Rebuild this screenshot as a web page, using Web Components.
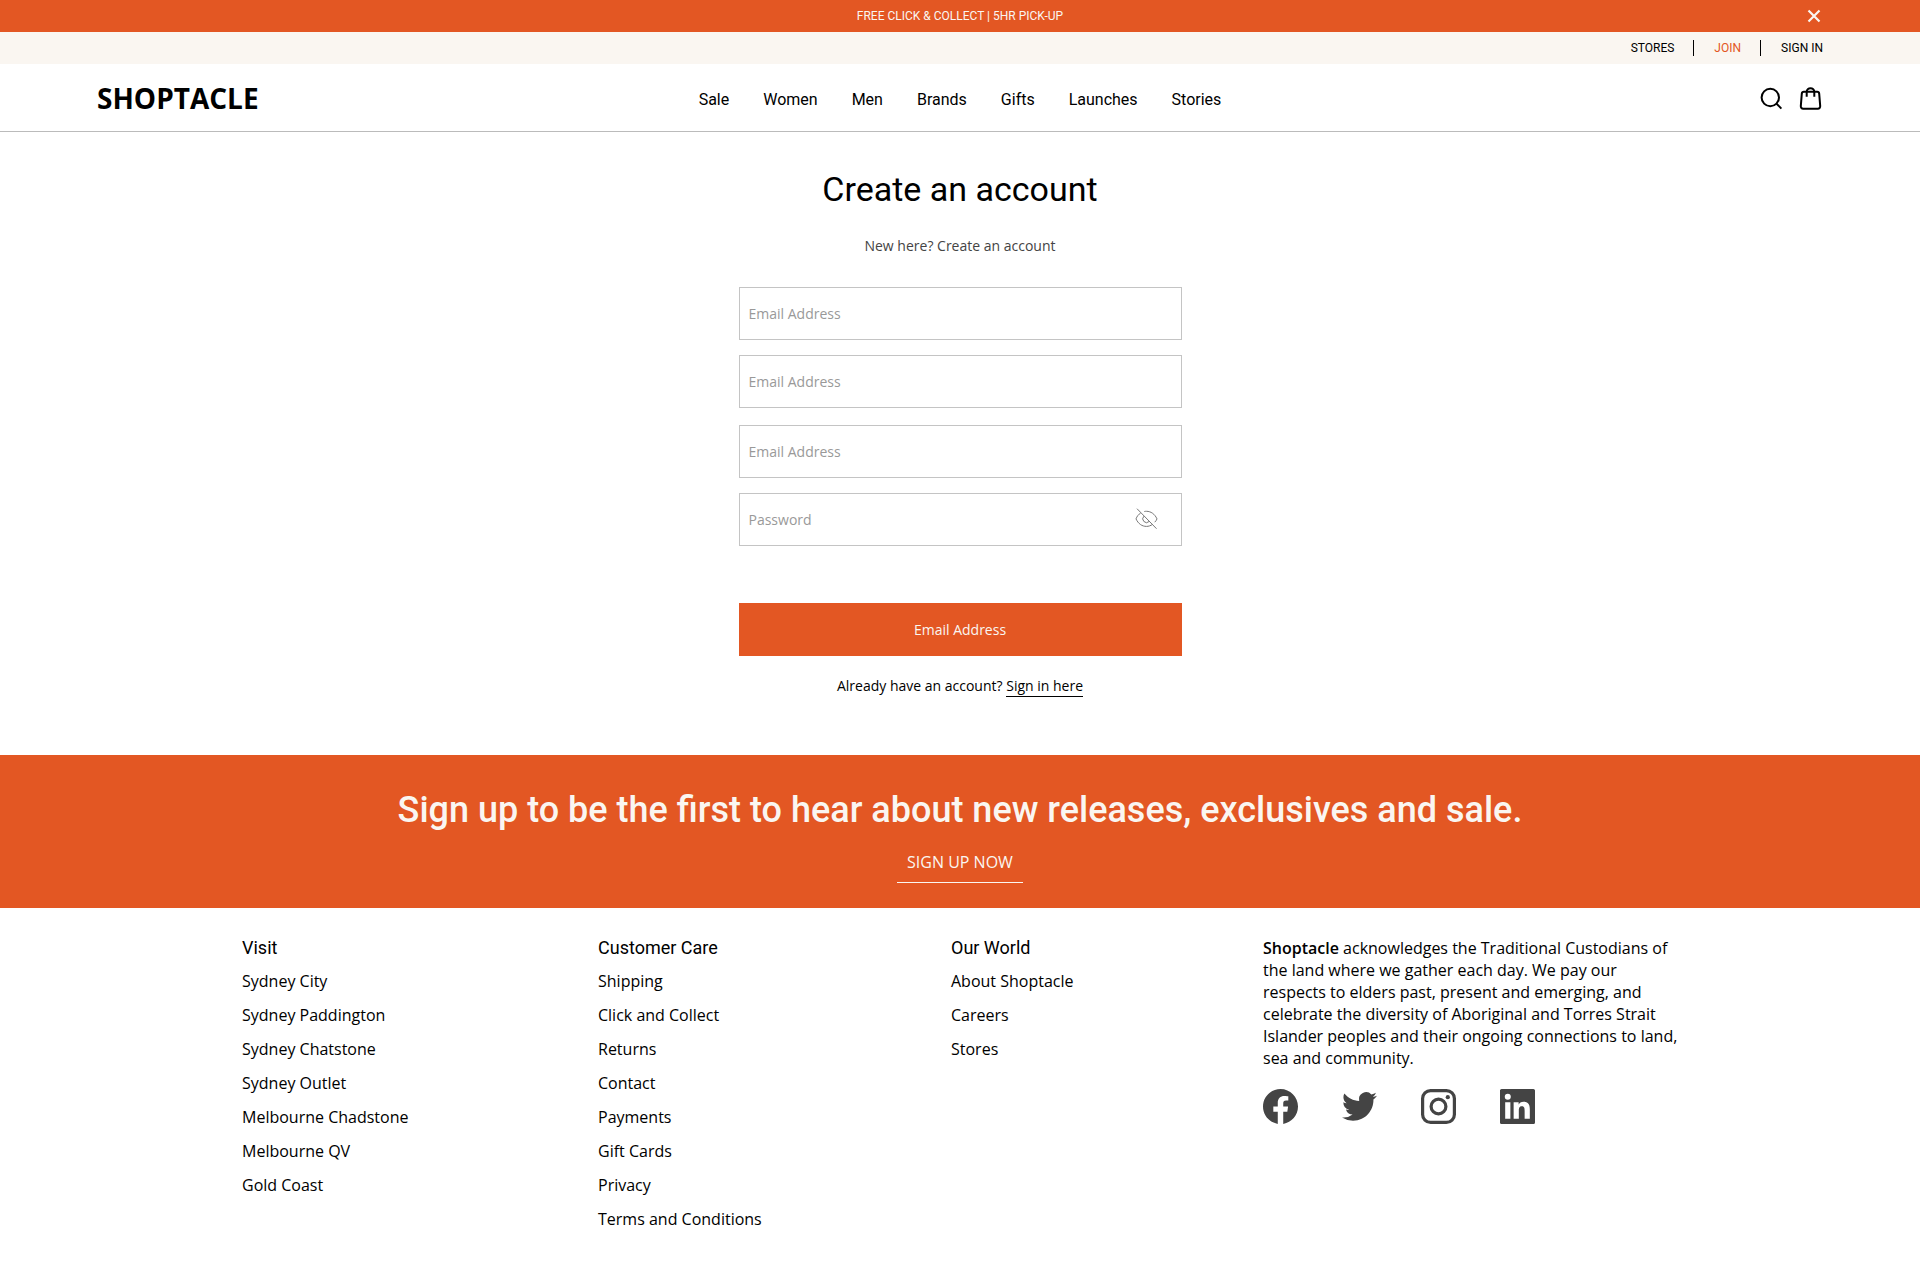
<!DOCTYPE html>
<html lang="en">
<head>
<meta charset="utf-8">
<meta name="viewport" content="width=device-width, initial-scale=1">
<title>Create an account | Shoptacle</title>
<style>
  body {
    margin: 0;
    background: #fff;
    color: #000;
    font-family: "Open Sans", sans-serif;
    font-size: 16px;
    --accent: #e35723;
    --cream: #faf6f1;
    --gutter: 97px;
    --heading-font: Roboto, sans-serif;
  }
</style>
</head>
<body>

<promo-bar>FREE CLICK &amp; COLLECT | 5HR PICK-UP</promo-bar>

<account-bar>
  <a href="#stores">STORES</a>
  <a href="#join" aria-current="page">JOIN</a>
  <a href="#signin">SIGN IN</a>
</account-bar>

<site-header>
  <a href="#sale">Sale</a>
  <a href="#women">Women</a>
  <a href="#men">Men</a>
  <a href="#brands">Brands</a>
  <a href="#gifts">Gifts</a>
  <a href="#launches">Launches</a>
  <a href="#stories">Stories</a>
</site-header>

<signup-form></signup-form>

<newsletter-band>
  <span slot="title">Sign up to be the first to hear about new releases, exclusives and sale.</span>
  <a slot="action" href="#newsletter">SIGN UP NOW</a>
</newsletter-band>

<site-footer>
  <link-column heading="Visit" links="Sydney City,Sydney Paddington,Sydney Chatstone,Sydney Outlet,Melbourne Chadstone,Melbourne QV,Gold Coast"></link-column>
  <link-column heading="Customer Care" links="Shipping,Click and Collect,Returns,Contact,Payments,Gift Cards,Privacy,Terms and Conditions"></link-column>
  <link-column heading="Our World" links="About Shoptacle,Careers,Stores"></link-column>
  <footer-about></footer-about>
</site-footer>

<script>
// orange strip at the very top
class PromoBar extends HTMLElement {
  constructor() {
    super();
    this.attachShadow({ mode: 'open' });
    this.shadowRoot.innerHTML = `
      <style>
        :host {
          display: grid;
          grid-template-columns: 1fr auto 1fr;
          align-items: center;
          height: 32px;
          padding: 0 var(--gutter);
          background: var(--accent);
          color: var(--cream);
          font-family: var(--heading-font);
          font-size: 12px;
          line-height: 16px;
        }
        .text { grid-column: 2; }
        button {
          justify-self: end;
          display: flex;
          padding: 0;
          border: 0;
          background: none;
          color: inherit;
          cursor: pointer;
        }
      </style>
      <div class="text"><slot></slot></div>
      <button type="button" aria-label="Close">
        <svg width="18" height="18" viewBox="0 0 18 18" fill="none" stroke="currentColor" stroke-width="2.2">
          <path d="M3.5 3.5l11 11M14.5 3.5l-11 11"/>
        </svg>
      </button>
    `;
    this.shadowRoot.querySelector('button').addEventListener('click', () => this.remove());
  }
}

class AccountBar extends HTMLElement {
  constructor() {
    super();
    this.attachShadow({ mode: 'open' });
    this.shadowRoot.innerHTML = `
      <style>
        :host {
          display: flex;
          justify-content: flex-end;
          align-items: center;
          height: 32px;
          padding: 0 var(--gutter);
          background: var(--cream);
          font-family: var(--heading-font);
          font-size: 12px;
          line-height: 16px;
        }
        ::slotted(a) {
          color: inherit;
          text-decoration: none;
        }
        ::slotted(a:not(:first-child)) {
          position: relative;
          margin-left: 19px;
          padding-left: 20px;
          border-left: 1px solid #000;
        }
        ::slotted(a[aria-current]) {
          color: var(--accent);
        }
      </style>
      <slot></slot>
    `;
  }
}

class SiteHeader extends HTMLElement {
  constructor() {
    super();
    this.attachShadow({ mode: 'open' });
    this.shadowRoot.innerHTML = `
      <style>
        :host {
          display: grid;
          grid-template-columns: 1fr auto 1fr;
          align-items: center;
          height: 67px;
          padding: 0 var(--gutter);
          border-bottom: 1px solid #bbb;
        }
        .logo {
          color: inherit;
          font-size: 28px;
          font-weight: 700;
          line-height: 36px;
          text-decoration: none;
        }
        nav {
          display: flex;
          gap: 34px;
          padding-top: 4px;
          font-family: var(--heading-font);
          line-height: 20px;
        }
        ::slotted(a) {
          color: inherit;
          text-decoration: none;
        }
        .tools {
          display: flex;
          justify-content: flex-end;
          gap: 16px;
        }
        button {
          display: flex;
          padding: 0;
          border: 0;
          background: none;
          color: inherit;
          cursor: pointer;
        }
      </style>
      <a class="logo" href="#home">SHOPTACLE</a>
      <nav><slot></slot></nav>
      <div class="tools">
        <button type="button" aria-label="Search">
          <svg width="24" height="24" viewBox="0 0 24 24" fill="none" stroke="currentColor" stroke-width="2">
            <circle cx="11.3" cy="11.5" r="8.7"/>
            <path d="M17.4 17.6l5 5"/>
          </svg>
        </button>
        <button type="button" aria-label="Shopping bag">
          <svg width="24" height="24" viewBox="0 0 24 24" fill="none" stroke="currentColor" stroke-width="2" stroke-linejoin="round">
            <path d="M4.8 5.8h13.4a2 2 0 0 1 2 1.8l1 12.6a2.3 2.3 0 0 1-2.3 2.5H4.1a2.3 2.3 0 0 1-2.3-2.5l1-12.6a2 2 0 0 1 2-1.8z"/>
            <path d="M7.7 10.8V6a3.8 3.8 0 0 1 7.6 0v4.8"/>
          </svg>
        </button>
      </div>
    `;
  }
}

class TextField extends HTMLElement {
  constructor() {
    super();
    this.attachShadow({ mode: 'open' });
    this.shadowRoot.innerHTML = `
      <style>
        :host {
          display: flex;
          align-items: center;
          box-sizing: border-box;
          height: 53px;
          border: 1px solid #c4c4c4;
        }
        input {
          flex: 1;
          min-width: 0;
          height: 100%;
          box-sizing: border-box;
          padding: 0 9px;
          border: 0;
          background: none;
          font: 14px/20px "Open Sans", sans-serif;
          color: #000;
        }
        input::placeholder {
          color: #999;
          opacity: 1;
        }
        button {
          display: flex;
          margin-right: 23px;
          padding: 0;
          border: 0;
          background: none;
          color: #777;
          cursor: pointer;
        }
      </style>
      <input>
    `;
    this._input = this.shadowRoot.querySelector('input');
  }

  connectedCallback() {
    const label = this.getAttribute('label');
    this._input.type = this.getAttribute('type') || 'text';
    this._input.placeholder = label;
    this._input.setAttribute('aria-label', label);

    if (this._input.type === 'password') this._addToggle();
  }

  // show / hide button for passwords
  _addToggle() {
    const btn = document.createElement('button');
    btn.type = 'button';
    btn.setAttribute('aria-label', 'Show password');
    btn.innerHTML = `
      <svg width="24" height="24" viewBox="-0.5 0.8 24 24" fill="none" stroke="currentColor" stroke-width="1">
        <path d="M2.5 1.5l19.5 20"/>
        <path d="M9.8 4.3c.7-.2 1.5-.2 2.2-.2 4.3 0 8.200 2.6 10.5 7.6-.5 1.300-1.3 2.4-2.3 3.3"/>
        <path d="M6.2 5.8C4 7.2 2.4 9.2 1.5 11.7c2.3 4.9 6 7.5 10.5 7.5 2.1 0 4.2-.7 6-2"/>
        <path d="M9.4 9a3.7 3.7 0 0 0 5.2 5.3"/>
      </svg>
    `;
    btn.addEventListener('click', () => {
      this._input.type = this._input.type === 'password' ? 'text' : 'password';
    });
    this.shadowRoot.appendChild(btn);
  }
}

class SignupForm extends HTMLElement {
  constructor() {
    super();
    this.attachShadow({ mode: 'open' });
    this.shadowRoot.innerHTML = `
      <style>
        :host {
          display: flex;
          flex-direction: column;
          align-items: center;
          padding: 37px 20px 58px;
          font-size: 14px;
          line-height: 20px;
        }
        h1 {
          margin: 0;
          font: 400 34px/40px var(--heading-font);
        }
        .intro {
          margin: 27px 0 31px;
          color: #444;
        }
        form {
          display: flex;
          flex-direction: column;
          gap: 17px;
          width: 100%;
          max-width: 443px;
        }
        .group {
          display: grid;
          gap: 15px;
        }
        button {
          height: 53px;
          margin-top: 40px;
          border: 0;
          background: var(--accent);
          color: var(--cream);
          font: inherit;
          cursor: pointer;
        }
        .signin {
          margin: 20px 0 0;
          font-weight: 500;
        }
        .signin a {
          display: inline-block;
          color: inherit;
          text-decoration: none;
          border-bottom: 1px solid #000;
        }
      </style>
      <h1>Create an account</h1>
      <p class="intro">New here? Create an account</p>
      <form>
        <div class="group">
          <text-field label="Email Address"></text-field>
          <text-field label="Email Address"></text-field>
        </div>
        <div class="group">
          <text-field label="Email Address" type="email"></text-field>
          <text-field label="Password" type="password"></text-field>
        </div>
        <button type="submit">Email Address</button>
      </form>
      <p class="signin">Already have an account? <a href="#signin">Sign in here</a></p>
    `;
    this.shadowRoot.querySelector('form').addEventListener('submit', e => e.preventDefault());
  }
}

class NewsletterBand extends HTMLElement {
  constructor() {
    super();
    this.attachShadow({ mode: 'open' });
    this.shadowRoot.innerHTML = `
      <style>
        :host {
          display: flex;
          flex-direction: column;
          align-items: center;
          padding: 35px 20px 25px;
          background: var(--accent);
          color: var(--cream);
          text-align: center;
        }
        h2 {
          margin: 0 0 20px;
          font: 500 36px/40px var(--heading-font);
        }
        ::slotted(a) {
          padding: 0 10px 8px;
          border-bottom: 1px solid var(--cream);
          color: inherit;
          line-height: 24px;
          text-decoration: none;
        }
      </style>
      <h2><slot name="title"></slot></h2>
      <slot name="action"></slot>
    `;
  }
}

class LinkColumn extends HTMLElement {
  constructor() {
    super();
    this.attachShadow({ mode: 'open' });
    this.shadowRoot.innerHTML = `
      <style>
        :host {
          display: block;
        }
        h3 {
          margin: 0;
          font: 400 18px/32px var(--heading-font);
        }
        ul {
          margin: 0;
          padding: 0;
          list-style: none;
          line-height: 34px;
        }
        a {
          color: inherit;
          text-decoration: none;
        }
        a:hover {
          text-decoration: underline;
        }
      </style>
      <h3></h3>
      <ul></ul>
    `;
  }

  connectedCallback() {
    this.shadowRoot.querySelector('h3').textContent = this.getAttribute('heading');
    const list = this.shadowRoot.querySelector('ul');
    list.textContent = '';
    for (const name of this.getAttribute('links').split(',')) {
      const li = document.createElement('li');
      const a = document.createElement('a');
      a.href = '#' + name.toLowerCase().replace(/ /g, '-');
      a.textContent = name;
      li.appendChild(a);
      list.appendChild(li);
    }
  }
}

class FooterAbout extends HTMLElement {
  constructor() {
    super();
    this.attachShadow({ mode: 'open' });
    this.shadowRoot.innerHTML = `
      <style>
        :host {
          display: block;
          padding-top: 5px;
          line-height: 22px;
        }
        p {
          margin: 0 0 20px;
        }
        b {
          font-weight: 600;
        }
        .social {
          display: flex;
          gap: 44px;
        }
        .social a {
          display: flex;
          color: #444;
        }
      </style>
      <p><b>Shoptacle</b> acknowledges the Traditional Custodians of the land where we gather each day. We pay our respects to elders past, present and emerging, and celebrate the diversity of Aboriginal and Torres Strait Islander peoples and their ongoing connections to land, sea and community.</p>
      <div class="social">
        <a href="#facebook" aria-label="Facebook">
          <svg width="35" height="35" viewBox="0 0 24 24" fill="currentColor">
            <path d="M24 12.073c0-6.627-5.373-12-12-12s-12 5.373-12 12c0 5.990 4.388 10.954 10.125 11.854v-8.385H7.078v-3.470h3.047V9.430c0-3.007 1.792-4.669 4.533-4.669 1.312 0 2.686.235 2.686.235v2.953H15.830c-1.491 0-1.956.925-1.956 1.874v2.250h3.328l-.532 3.470h-2.796v8.385C19.612 23.027 24 18.062 24 12.073z"/>
          </svg>
        </a>
        <a href="#twitter" aria-label="Twitter">
          <svg width="35" height="35" viewBox="0 0 24 24" fill="currentColor">
            <path d="M23.953 4.570a10 10 0 0 1-2.825.775 4.958 4.958 0 0 0 2.163-2.723c-.951.555-2.005.959-3.127 1.184a4.920 4.920 0 0 0-8.384 4.482C7.690 8.095 4.067 6.130 1.640 3.162a4.822 4.822 0 0 0-.666 2.475c0 1.710.870 3.213 2.188 4.096a4.904 4.904 0 0 1-2.228-.616v.060a4.923 4.923 0 0 0 3.946 4.827 4.996 4.996 0 0 1-2.212.085 4.936 4.936 0 0 0 4.604 3.417 9.867 9.867 0 0 1-6.102 2.105c-.390 0-.779-.023-1.170-.067a13.995 13.995 0 0 0 7.557 2.209c9.053 0 13.998-7.496 13.998-13.985 0-.210 0-.420-.015-.630A9.935 9.935 0 0 0 24 4.590z"/>
          </svg>
        </a>
        <a href="#instagram" aria-label="Instagram">
          <svg width="35" height="35" viewBox="0 0 35 35" fill="none" stroke="currentColor" stroke-width="3.2">
            <rect x="1.6" y="1.6" width="31.8" height="31.8" rx="8"/>
            <circle cx="17.5" cy="17.5" r="7.4"/>
            <circle cx="26.8" cy="8.2" r="2.1" fill="currentColor" stroke="none"/>
          </svg>
        </a>
        <a href="#linkedin" aria-label="LinkedIn">
          <svg width="35" height="35" viewBox="0 0 24 24" fill="currentColor">
            <path d="M20.447 20.452h-3.554v-5.569c0-1.328-.027-3.037-1.852-3.037-1.853 0-2.136 1.445-2.136 2.939v5.667H9.351V9h3.414v1.561h.046c.477-.9 1.637-1.850 3.370-1.850 3.601 0 4.267 2.370 4.267 5.455v6.286zM5.337 7.433a2.062 2.062 0 0 1-2.063-2.065 2.064 2.064 0 1 1 2.063 2.065zm1.782 13.019H3.555V9h3.564v11.452zM22.9 0H1.1C.5 0 0 .5 0 1.1v21.8c0 .6.5 1.1 1.1 1.1h21.8c.6 0 1.1-.5 1.1-1.1V1.1C24 .5 23.5 0 22.9 0z"/>
          </svg>
        </a>
      </div>
    `;
  }
}

class SiteFooter extends HTMLElement {
  constructor() {
    super();
    this.attachShadow({ mode: 'open' });
    this.shadowRoot.innerHTML = `
      <style>
        :host {
          display: grid;
          grid-template-columns: 356fr 353fr 312fr 420fr;
          padding: 24px 237px 34px 242px;
        }
      </style>
      <slot></slot>
    `;
  }
}

customElements.define('promo-bar', PromoBar);
customElements.define('account-bar', AccountBar);
customElements.define('site-header', SiteHeader);
customElements.define('text-field', TextField);
customElements.define('signup-form', SignupForm);
customElements.define('newsletter-band', NewsletterBand);
customElements.define('link-column', LinkColumn);
customElements.define('footer-about', FooterAbout);
customElements.define('site-footer', SiteFooter);
</script>
</body>
</html>
